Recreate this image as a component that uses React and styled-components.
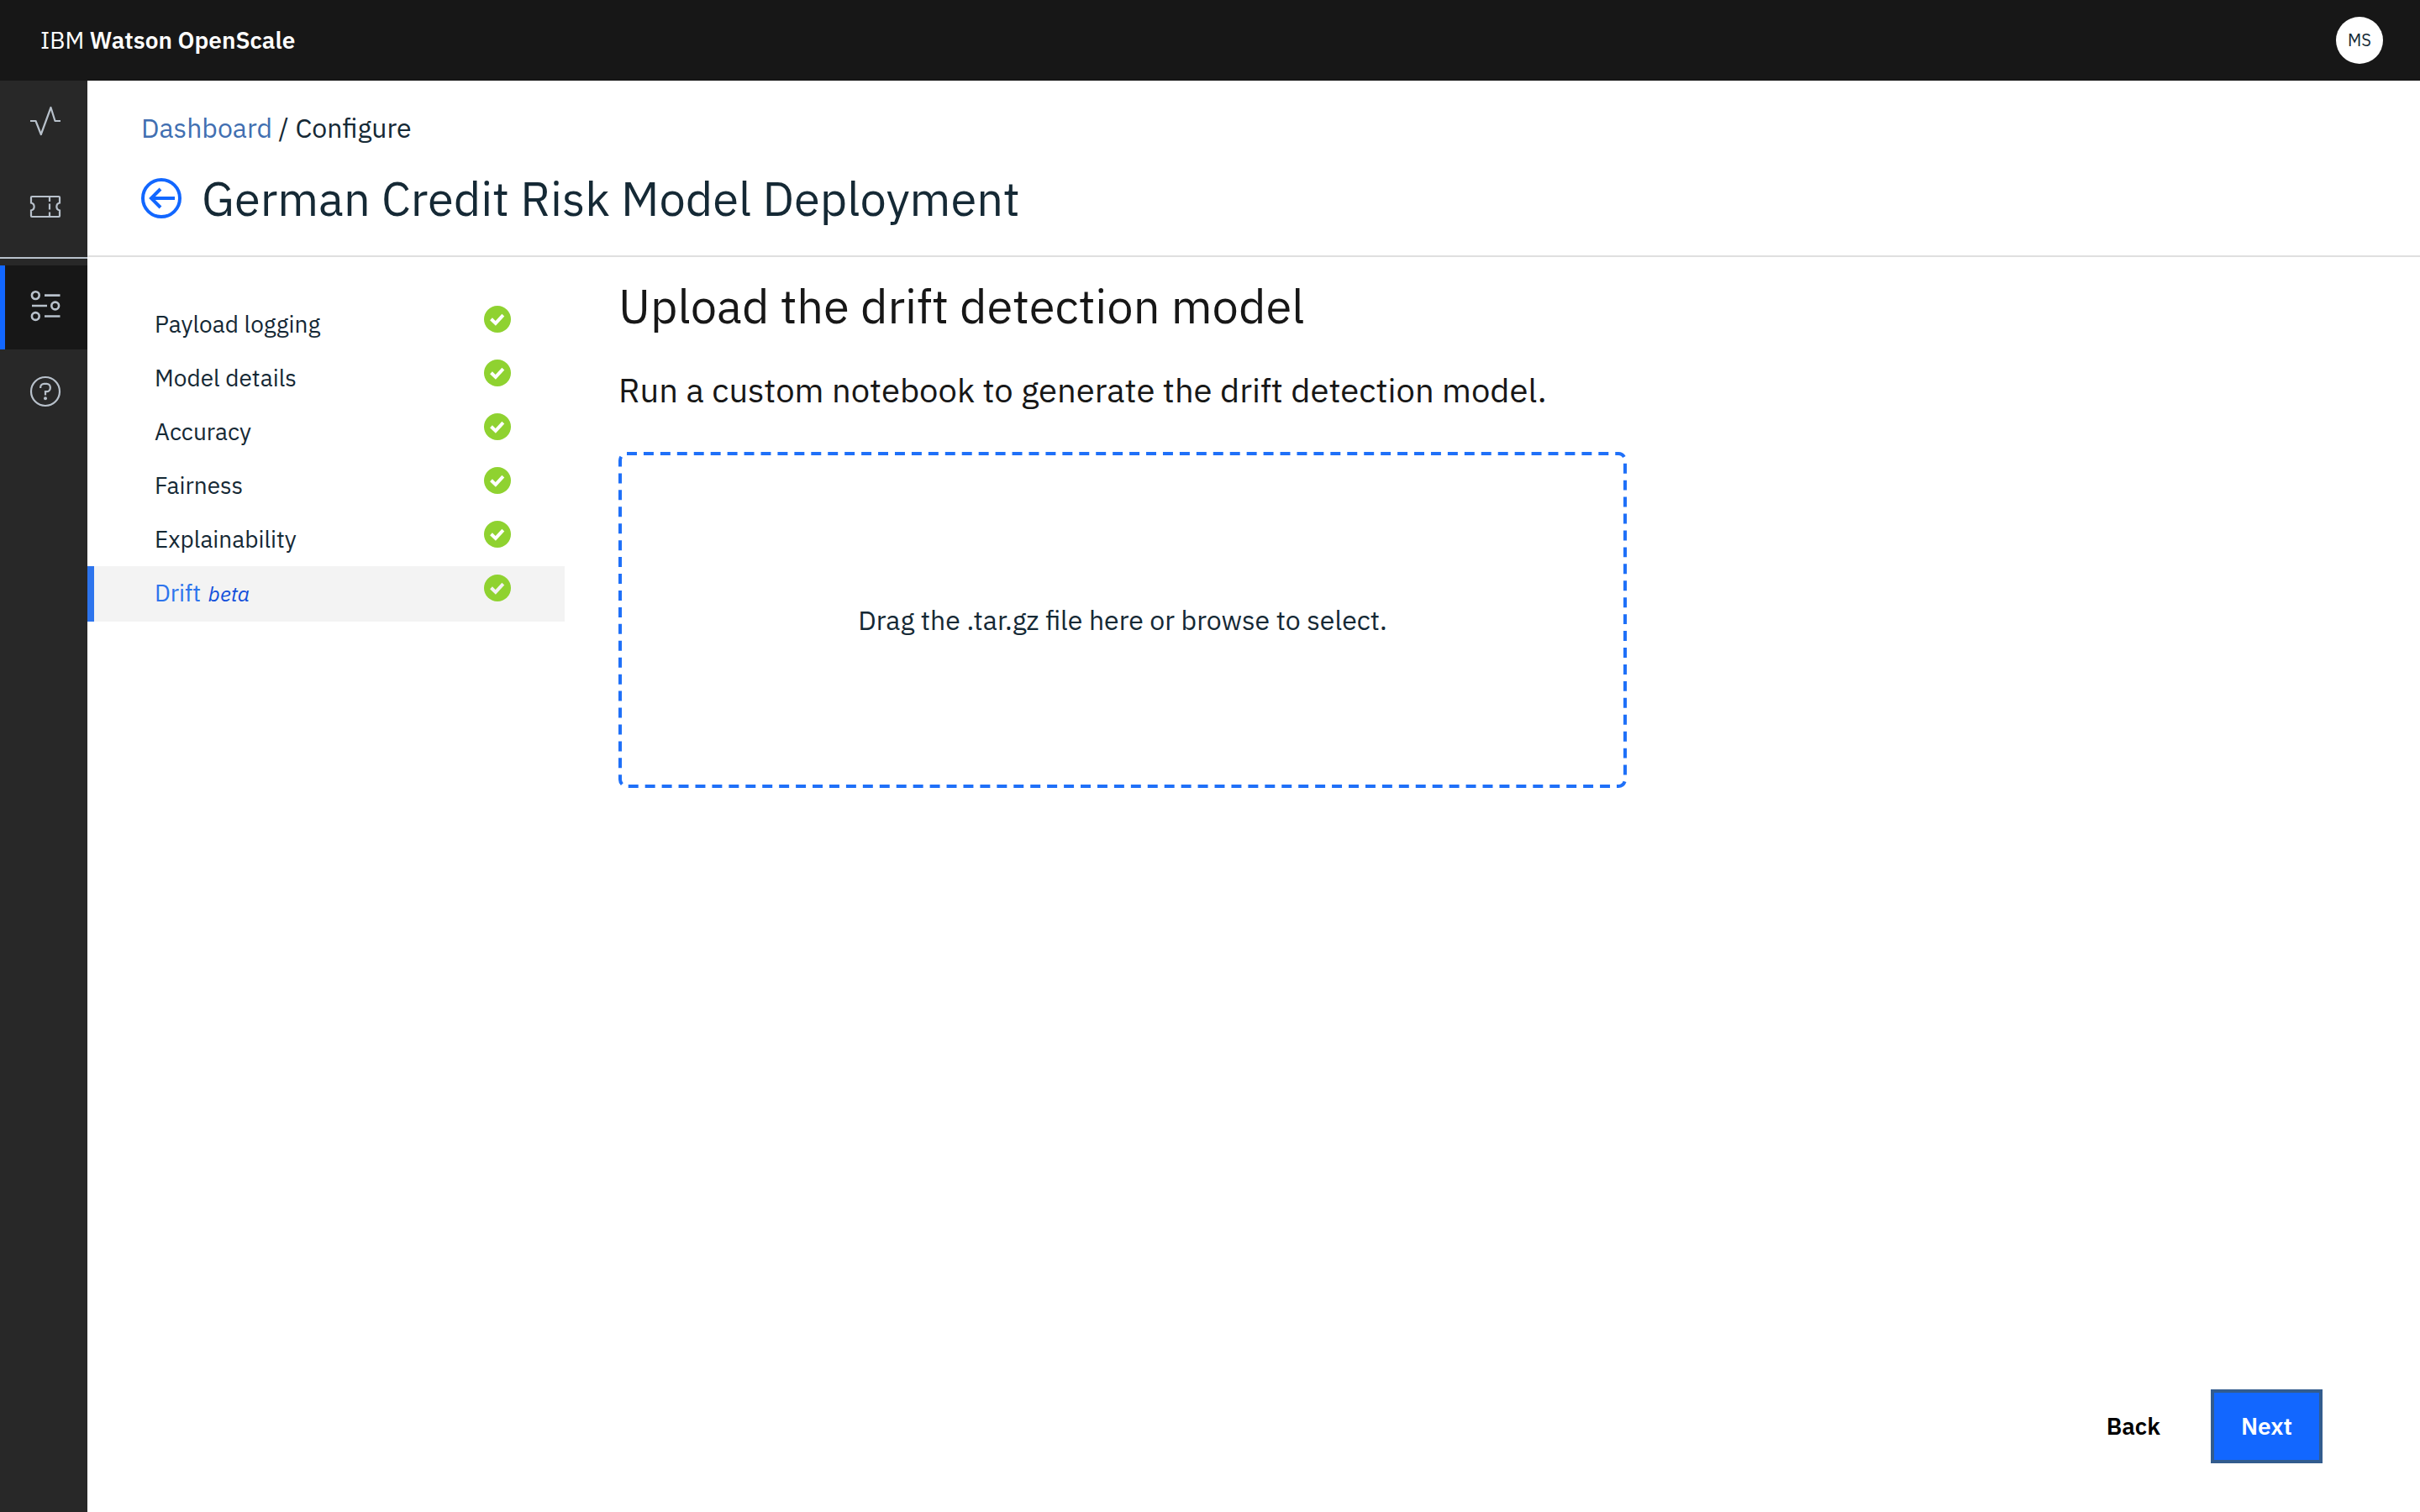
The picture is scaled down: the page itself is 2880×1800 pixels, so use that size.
import React from "react";
import styled, { createGlobalStyle, css } from "styled-components";

const Global = createGlobalStyle`
  *, *::before, *::after { box-sizing: border-box; }
  html, body, #root { height: 100%; }
  body { margin: 0; background: #fff; color: #152935; font-family: "IBM Plex Sans", Roboto, "Liberation Sans", sans-serif; }
  h1, h2, p, ul { margin: 0; padding: 0; }
  button { font: inherit; }
`;

const Page = styled.div`
  min-height: 100%;
  display: grid;
  grid-template-columns: 104px 1fr;
  grid-template-rows: 96px 1fr;
`;

const TopBar = styled.header`
  grid-column: 1 / -1;
  display: flex;
  align-items: center;
  justify-content: space-between;
  padding: 0 44px 0 48px;
  background: #171717;
  color: #fff;
`;

const Brand = styled.a`
  font-size: 28px;
  line-height: 36px;
  color: inherit;
  text-decoration: none;
  b { font-weight: 600; }
`;

const Avatar = styled.button`
  width: 56px;
  height: 56px;
  padding: 0;
  border: 0;
  border-radius: 50%;
  background: #fff;
  color: #152935;
  font-size: 20px;
  line-height: 28px;
`;

const Rail = styled.nav`
  display: flex;
  flex-direction: column;
  background: #282828;
`;

const RailItem = styled.a`
  height: 100px;
  display: flex;
  align-items: center;
  justify-content: center;
  padding-left: 4px;
  color: #b8c1cb;
  ${(p) => p.$active && css`
    background: #171717;
    box-shadow: inset 6px 0 0 #1267ff;
  `}
`;

const RailRule = styled.hr`
  width: 100%;
  height: 2px;
  margin: 10px 0 8px;
  border: 0;
  background: #b8c1cb;
`;

const Main = styled.main`
  display: flex;
  flex-direction: column;
  min-width: 0;
`;

const PageHead = styled.div`
  display: flex;
  flex-direction: column;
  gap: 30px;
  padding: 36px 64px 34px;
  border-bottom: 2px solid #dfdfdf;
`;

const Crumbs = styled.nav`
  font-size: 32px;
  line-height: 40px;
  a { color: #416fb1; text-decoration: none; }
`;

const TitleRow = styled.div`
  display: flex;
  align-items: center;
  gap: 24px;
`;

const IconLink = styled.a`
  display: flex;
  color: #1267ff;
`;

const Title = styled.h1`
  font-size: 56px;
  line-height: 68px;
  font-weight: 400;
  color: ${(p) => p.$color || "#152935"};
`;

const Body = styled.div`
  flex: 1;
  display: grid;
  grid-template-columns: 568px 1fr;
  column-gap: 64px;
`;

const Steps = styled.ul`
  list-style: none;
  padding-top: 48px;
`;

const Step = styled.a`
  display: flex;
  align-items: flex-start;
  justify-content: space-between;
  height: 64px;
  padding: 10px 64px 0 80px;
  font-size: 28px;
  line-height: 44px;
  color: #152935;
  text-decoration: none;
  ${(p) => p.$active && css`
    height: 66px;
    background: #f3f3f3;
    box-shadow: inset 8px 0 0 #2d74ed;
    color: #2d74ed;
  `}
  em { margin-left: 2px; font-size: 25px; color: #1350db; }
`;

const Panel = styled.section`
  display: flex;
  flex-direction: column;
  padding: 24px 116px 58px 0;
`;

const Lead = styled.p`
  margin-top: 40px;
  font-size: 40px;
  line-height: 52px;
  color: #171717;
`;

const DropZone = styled.label`
  position: relative;
  display: flex;
  align-items: center;
  justify-content: center;
  width: 100%;
  max-width: 1200px;
  height: 400px;
  margin-top: 48px;
  font-size: 32px;
  line-height: 40px;
  cursor: pointer;
  input { position: absolute; inset: 0; opacity: 0; }
`;

const Dashes = styled.svg`
  position: absolute;
  inset: 0;
  width: 100%;
  height: 100%;
  fill: none;
  stroke: #1f70f8;
  stroke-width: 4px;
  rect { x: 2px; y: 2px; width: calc(100% - 4px); height: calc(100% - 4px); }
`;

const Actions = styled.div`
  display: flex;
  justify-content: flex-end;
  gap: 24px;
  margin-top: auto;
`;

const Button = styled.button`
  height: 88px;
  padding: 0 32px 2px;
  border: 4px solid ${(p) => (p.$primary ? "#325c8e" : "transparent")};
  background: ${(p) => (p.$primary ? "#1267ff" : "transparent")};
  color: ${(p) => (p.$primary ? "#fff" : "#000")};
  font-size: 28px;
  font-weight: 600;
`;

const Drawing = styled.svg`
  fill: none;
  stroke: currentColor;
  overflow: visible;
`;

const Icon = ({ size = 36, children }) => (
  <Drawing width={size} height={size} viewBox={`0 0 ${size} ${size}`} strokeWidth="2.2" aria-hidden="true">
    {children}
  </Drawing>
);

const PulseIcon = () => (
  <Icon><path d="M0 16h6.5L12.8 32 24.5 0l5 16H36" strokeLinejoin="round" /></Icon>
);

const TicketIcon = () => (
  <Icon>
    <path d="M2 6h32a1 1 0 0 1 1 1v6.5a4.6 4.6 0 0 0 0 9V29a1 1 0 0 1-1 1H2a1 1 0 0 1-1-1v-6.5a4.6 4.6 0 0 0 0-9V7a1 1 0 0 1 1-1z" />
    <path d="M23 6v6M23 14.500v7M23 24.500v6" />
  </Icon>
);

const SettingsIcon = () => (
  <Icon>
    <g strokeWidth="2.6">
      <circle cx="6.300" cy="3.600" r="4.400" />
      <circle cx="29.700" cy="16" r="4.400" />
      <circle cx="6.300" cy="28.500" r="4.400" />
      <path d="M17 3.600h18.500M2 16h18M17 28.500h18.500" />
    </g>
  </Icon>
);

const HelpIcon = () => (
  <Icon>
    <circle cx="18" cy="18" r="17" />
    <path d="M12.200 14v-1a4.200 4.200 0 0 1 4.200-4.200h3.200a4.200 4.200 0 0 1 4.200 4.200v1a4.200 4.200 0 0 1-4.200 4.200H18v4.300" />
    <circle cx="18" cy="26.300" r="2" fill="currentColor" stroke="none" />
  </Icon>
);

const BackIcon = () => (
  <Icon size={48}>
    <g strokeWidth="4">
      <circle cx="24" cy="24" r="22" />
      <path d="M40 24H12M23 13L12 24l11 11" />
    </g>
  </Icon>
);

const DoneIcon = ({ tick }) => (
  <svg width="32" height="32" viewBox="0 0 32 32" role="img" aria-label="Complete">
    <circle cx="16" cy="16" r="16" fill="#8fd230" />
    <path d="M8.500 15.800l5.300 5.100L22.800 11.200" fill="none" stroke={tick} strokeWidth="4" />
  </svg>
);

const steps = ["Payload logging", "Model details", "Accuracy", "Fairness", "Explainability", "Drift"];

export default function App() {
  return (
    <>
      <Global />
      <Page>
        <TopBar>
          <Brand href="#home">IBM <b>Watson OpenScale</b></Brand>
          <Avatar type="button">MS</Avatar>
        </TopBar>
        <Rail aria-label="Main">
          <RailItem href="#insights" aria-label="Insights"><PulseIcon /></RailItem>
          <RailItem href="#transactions" aria-label="Transactions"><TicketIcon /></RailItem>
          <RailRule />
          <RailItem href="#configure" aria-label="Configure" $active><SettingsIcon /></RailItem>
          <RailItem href="#help" aria-label="Help"><HelpIcon /></RailItem>
        </Rail>
        <Main>
          <PageHead>
            <Crumbs aria-label="Breadcrumb"><a href="#dashboard">Dashboard</a> / Configure</Crumbs>
            <TitleRow>
              <IconLink href="#back" aria-label="Go back"><BackIcon /></IconLink>
              <Title>German Credit Risk Model Deployment</Title>
            </TitleRow>
          </PageHead>
          <Body>
            <Steps>
              {steps.map((name) => (
                <li key={name}>
                  <Step href={`#${name.toLowerCase().replace(" ", "-")}`} $active={name === "Drift"}>
                    <span>{name}{name === "Drift" && <> <em>beta</em></>}</span>
                    <DoneIcon tick={name === "Drift" ? "#f3f3f3" : "#fff"} />
                  </Step>
                </li>
              ))}
            </Steps>
            <Panel>
              <Title as="h2" $color="#171717">Upload the drift detection model</Title>
              <Lead>Run a custom notebook to generate the drift detection model.</Lead>
              <DropZone>
                <Dashes aria-hidden="true"><rect rx="8" pathLength="3180" strokeDasharray="12 8" /></Dashes>
                Drag the .tar.gz file here or browse to select.
                <input type="file" accept=".gz" />
              </DropZone>
              <Actions>
                <Button type="button">Back</Button>
                <Button type="button" $primary>Next</Button>
              </Actions>
            </Panel>
          </Body>
        </Main>
      </Page>
    </>
  );
}
